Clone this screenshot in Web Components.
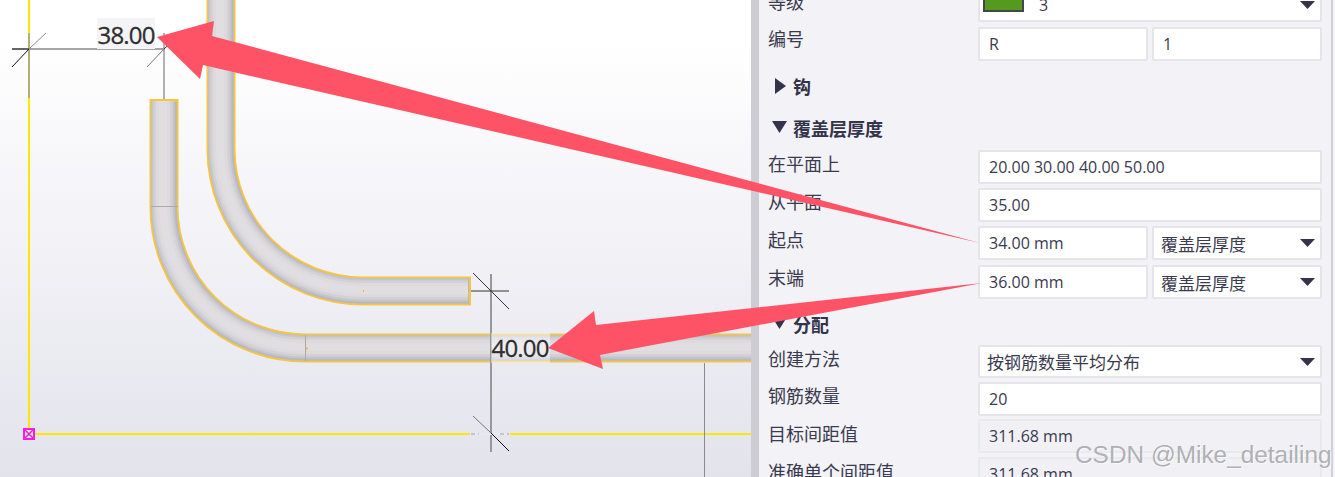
<!DOCTYPE html>
<html lang="zh">
<head>
<meta charset="utf-8">
<title>钢筋属性</title>
<style>
  html, body { margin: 0; height: 100%; overflow: hidden; background: #f2f2f7; }
  body { font-family: "Open Sans", "Noto Sans CJK SC", sans-serif; }
  prop-row { --label-shift: 1px; }
</style>
</head>
<body>
<rebar-app>
  <model-view slot="view"></model-view>
  <prop-panel slot="panel">
    <prop-row label="等级" first>
      <prop-select swatch="#559a1e" value="3"></prop-select>
    </prop-row>
    <prop-row label="编号" style="--label-shift:-1px">
      <prop-field>R</prop-field>
      <prop-field>1</prop-field>
    </prop-row>
    <prop-header collapsed lift>钩</prop-header>
    <prop-header lift>覆盖层厚度</prop-header>
    <prop-row label="在平面上"><prop-field>20.00 30.00 40.00 50.00</prop-field></prop-row>
    <prop-row label="从平面"><prop-field>35.00</prop-field></prop-row>
    <prop-row label="起点">
      <prop-field>34.00 mm</prop-field>
      <prop-select value="覆盖层厚度"></prop-select>
    </prop-row>
    <prop-row label="末端" style="margin-top:1px;--label-shift:0px">
      <prop-field>36.00 mm</prop-field>
      <prop-select value="覆盖层厚度"></prop-select>
    </prop-row>
    <prop-header>分配</prop-header>
    <prop-row label="创建方法" tight><prop-select value="按钢筋数量平均分布"></prop-select></prop-row>
    <prop-row label="钢筋数量" style="margin-bottom:3px;margin-top:1px"><prop-field>20</prop-field></prop-row>
    <prop-row label="目标间距值" style="--label-shift:2px"><prop-field readonly>311.68 mm</prop-field></prop-row>
    <prop-row label="准确单个间距值" style="--label-shift:2px"><prop-field readonly>311.68 mm</prop-field></prop-row>
  </prop-panel>
  <call-outs slot="over"></call-outs>
  <water-mark slot="over">CSDN @Mike_detailing</water-mark>
</rebar-app>

<script>
class RebarApp extends HTMLElement {
  constructor() {
    super();
    this.attachShadow({ mode: "open" });
    this.shadowRoot.innerHTML = `
      <style>
        :host { display: flex; position: relative; width: 1335px; height: 477px; overflow: hidden; }
        .splitter { flex: 0 0 8px; background: #ccccd2; }
        .edge { flex: 0 0 2px; background: #d0d0d6; }
        .rest { flex: 1; background: #f4f4f8; }
      </style>
      <slot name="view"></slot>
      <div class="splitter"></div>
      <slot name="panel"></slot>
      <div class="edge"></div>
      <div class="rest"></div>
      <slot name="over"></slot>
    `;
  }
}
customElements.define("rebar-app", RebarApp);

class ModelView extends HTMLElement {
  constructor() {
    super();
    this.attachShadow({ mode: "open" });
  }

  // stacked strokes give the tube its shading, light from the upper left
  bar(d, ends) {
    const layers = [[23, "#c6c5cc", -1], [19, "#d2d1d6", -1], [14, "#dcdadd", -1], [8, "#e0dee0", -1]];
    let out = `<path d="${ends}" fill="none" stroke="#f6c63f" stroke-width="29"/>`;
    out += `<path d="${d}" fill="none" stroke="#b8b8c0" stroke-width="25.500"/>`;
    for (const [w, c, o] of layers) {
      out += `<path d="${d}" fill="none" stroke="${c}" stroke-width="${w}" transform="translate(${o} ${o})"/>`;
    }
    return out;
  }

  connectedCallback() {
    const barA = "M164 102V207A141 141 0 0 0 305 348H752";
    const barAEnd = "M164 99V207A141 141 0 0 0 305 348H752";
    const barB = "M221 -2V149A142 142 0 0 0 363 291H469";
    const barBEnd = "M221 -2V149A142 142 0 0 0 363 291H471";
    this.shadowRoot.innerHTML = `
      <style>
        :host { display: block; flex: 0 0 751px; height: 477px; }
        svg { display: block; background: linear-gradient(#fff 0, #fff 40px, #f2f2f7 240px, #e3e3ec 477px); }
        text { font: 24px "Open Sans", sans-serif; letter-spacing: -.8px; fill: #2e2e30; stroke: #2e2e30; stroke-width: .3px; }
      </style>
      <svg width="751" height="477" viewBox="0 0 751 477">
        <path d="M29 0V434H751" fill="none" stroke="#ffe600" stroke-width="2"/>
        ${this.bar(barB, barBEnd)}
        ${this.bar(barA, barAEnd)}
        <path d="M151 206.500H178M305.500 335V361" stroke="#aaa" stroke-width="1" fill="none"/>
        <path d="M363 291h1M363.500 290v2M306 348.500h2M307 347v3" stroke="#f0b93a" stroke-width="1"/>

        <path d="M29 33V98" stroke="#9a9aa6" stroke-width="1.500"/>
        <path d="M12 49H165" stroke="#a4a4a4" stroke-width="2"/>
        <path d="M12 49H29" stroke="#666" stroke-width="2"/>
        <path d="M29 49L46 33" stroke="#888"/>
        <path d="M12 67L29 49" stroke="#111"/>
        <path d="M164 33V99" stroke="#999" stroke-width="1.500"/>
        <path d="M147 67L164 49" stroke="#777"/>
        <path d="M164 49L181 33" stroke="#333"/>
        <rect x="97" y="18" width="58" height="31" fill="#f4f4f6"/>
        <text x="97.500" y="43.500">38.00</text>

        <path d="M491 274V452" stroke="#98989c" stroke-width="2"/>
        <path d="M471 291H509" stroke="#333"/>
        <path d="M473 273L509 309" stroke="#333"/>
        <path d="M470 434H510" stroke="#e8e8ee" stroke-width="2"/>
        <path d="M471 434H479M500 434H509" stroke="#a0a0a8" stroke-width="1" stroke-dasharray="4 3"/>
        <path d="M473 416L491 433" stroke="#777"/>
        <path d="M491 433L509 451" stroke="#111"/>
        <path d="M704.500 363V477" stroke="#8a8a8e"/>
        <rect x="491" y="333" width="59" height="30" fill="#fff" fill-opacity=".45"/>
        <text x="491.500" y="357">40.00</text>

        <rect x="23" y="428" width="12" height="12" fill="#ff1ae8"/>
        <rect x="25" y="430" width="8" height="8" fill="#f4e6f4"/>
        <path d="M25 430L33 438M33 430L25 438" stroke="#e020d0" stroke-width="1.500"/>
      </svg>
    `;
  }
}
customElements.define("model-view", ModelView);

class PropPanel extends HTMLElement {
  constructor() {
    super();
    this.attachShadow({ mode: "open" });
    this.shadowRoot.innerHTML = `
      <style>
        :host { display: block; flex: 0 0 572px; height: 477px; overflow: hidden; background: #f2f2f7; color: #3a3a4e; font: 16px "Open Sans", "Noto Sans CJK SC", sans-serif; }
        .inner { display: flex; flex-direction: column; padding: 0 9px; margin-top: -12px; }
      </style>
      <div class="inner"><slot></slot></div>
    `;
  }
}
customElements.define("prop-panel", PropPanel);

class PropRow extends HTMLElement {
  constructor() {
    super();
    this.attachShadow({ mode: "open" });
    this.shadowRoot.innerHTML = `
      <style>
        :host { display: grid; grid-template-columns: 210px 1fr; margin-bottom: 4px; }
        :host([first]) { margin-bottom: 5px; }
        .label { font: 18px/24px "Noto Sans CJK SC", sans-serif; white-space: nowrap; margin-top: var(--label-shift, 0); }
        .fields { display: grid; grid-auto-flow: column; grid-auto-columns: minmax(0, 1fr); gap: 4px; }
        :host([tight]) { --field-height: 33px; margin-bottom: 3px; }
      </style>
      <div class="label"></div>
      <div class="fields"><slot></slot></div>
    `;
  }
  connectedCallback() {
    this.shadowRoot.querySelector(".label").textContent = this.getAttribute("label");
  }
}
customElements.define("prop-row", PropRow);

class PropField extends HTMLElement {
  constructor() {
    super();
    this.attachShadow({ mode: "open" });
    this.shadowRoot.innerHTML = `
      <style>
        :host { display: flex; align-items: center; box-sizing: border-box; height: var(--field-height, 34px); padding: 0 9px 1px; background: #fff; border: 2px solid #e4e4ea; border-radius: 2px; white-space: nowrap; overflow: hidden; }
        :host([readonly]) { background: #f0f0f5; border-color: #e9e9ee; }
      </style>
      <slot></slot>
    `;
  }
}
customElements.define("prop-field", PropField);

class PropSelect extends HTMLElement {
  constructor() {
    super();
    this.attachShadow({ mode: "open" });
  }
  connectedCallback() {
    const swatch = this.getAttribute("swatch");
    this.shadowRoot.innerHTML = `
      <style>
        :host { display: flex; align-items: center; box-sizing: border-box; height: var(--field-height, 34px); padding: 0 5px 0 7px; background: #fff; border: 2px solid #e4e4ea; border-radius: 2px; white-space: nowrap; font: 17px "Noto Sans CJK SC", "Open Sans", sans-serif; }
        .swatch { box-sizing: border-box; width: 41px; height: 14px; margin: 0 15px 0 -4px; background: ${swatch}; border: 2px solid #44474a; }
        .value { flex: 1; }
        :host([swatch]) .value { font: 16px "Open Sans", sans-serif; }
        svg { display: block; flex: none; }
      </style>
      ${swatch ? '<span class="swatch"></span>' : ""}
      <span class="value">${this.getAttribute("value")}</span>
      <svg width="15" height="8" viewBox="0 0 15 8"><path d="M0 0H15L7.500 8Z" fill="#33334a"/></svg>
    `;
  }
}
customElements.define("prop-select", PropSelect);

class PropHeader extends HTMLElement {
  constructor() {
    super();
    this.attachShadow({ mode: "open" });
  }
  connectedCallback() {
    const closed = this.hasAttribute("collapsed");
    this.shadowRoot.innerHTML = `
      <style>
        :host { display: flex; align-items: center; box-sizing: border-box; height: 42px; margin-top: ${closed ? 1 : 0}px; padding-left: 4px; font: bold 18px "Noto Sans CJK SC", sans-serif; color: #33334a; }
        :host([lift]) { padding-bottom: 2px; }
        .icon { flex: 0 0 21px; display: flex; }
        svg { display: block; }
      </style>
      <span class="icon">${closed
        ? '<svg width="14" height="16" viewBox="0 0 14 16" style="margin-left:3px"><path d="M0 0L11 8L0 16Z" fill="#33334a"/></svg>'
        : '<svg width="15" height="12" viewBox="0 0 15 12" style="margin-top:-2px"><path d="M0 0H15L7.500 12Z" fill="#33334a"/></svg>'}</span>
      <slot></slot>
    `;
  }
}
customElements.define("prop-header", PropHeader);

class CallOuts extends HTMLElement {
  constructor() {
    super();
    this.attachShadow({ mode: "open" });
    this.shadowRoot.innerHTML = `
      <style>
        :host { position: absolute; inset: 0; pointer-events: none; }
        svg { display: block; }
      </style>
      <svg width="1335" height="477" viewBox="0 0 1335 477">
        <path d="M157 37L214 21L212 36L980 243L203 65L200 79Z" fill="#fe5366"/>
        <path d="M548 348L594 311L596 325L982 283L600 355L603 369Z" fill="#fe5366"/>
      </svg>
    `;
  }
}
customElements.define("call-outs", CallOuts);

class WaterMark extends HTMLElement {
  constructor() {
    super();
    this.attachShadow({ mode: "open" });
    this.shadowRoot.innerHTML = `
      <style>
        :host { position: absolute; left: 1075px; top: 440px; font: 24.400px/30px "Liberation Sans", sans-serif; color: rgba(130, 130, 135, .62); text-shadow: 1px 1px 1px rgba(255, 255, 255, .7); white-space: nowrap; }
      </style>
      <slot></slot>
    `;
  }
}
customElements.define("water-mark", WaterMark);
</script>
</body>
</html>
